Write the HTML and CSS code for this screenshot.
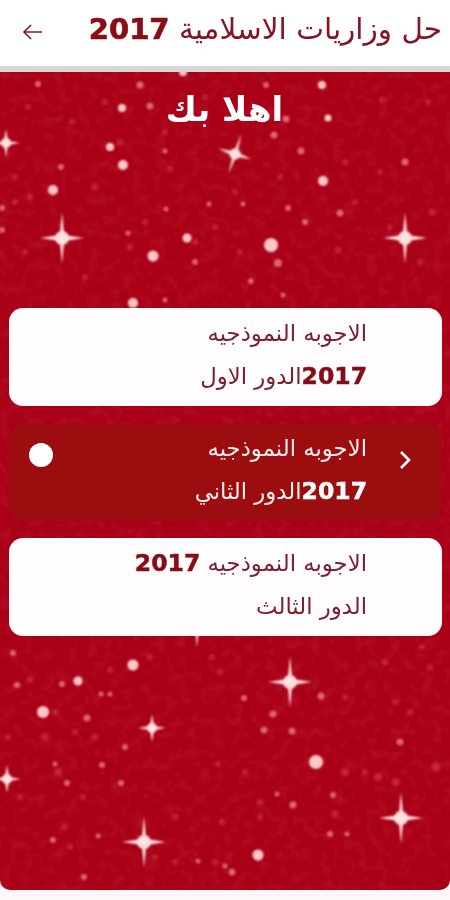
FILE: index.html
```html
<!DOCTYPE html>
<html lang="ar">
<head>
<meta charset="utf-8">
<title>حل وزاريات الاسلامية 2017</title>
<link rel="stylesheet" href="styles.css">
</head>
<body>
<div class="app">
  <header class="topbar">
    <svg class="back" viewBox="0 0 24 24" width="24" height="24" aria-hidden="true"><path d="M21 12H3M10 5l-7 7 7 7"/></svg>
    <h1 class="title">حل وزاريات الاسلامية <b class="year">2017</b></h1>
  </header>
  <main class="stage">
    <svg class="sky" viewBox="0 0 450 818" preserveAspectRatio="none" aria-hidden="true">
      <defs>
        <filter id="soft" x="-30%" y="-30%" width="160%" height="160%"><feGaussianBlur stdDeviation="1.6"/></filter>
        <filter id="softer" x="-30%" y="-30%" width="160%" height="160%"><feGaussianBlur stdDeviation="1.3"/></filter>
        <filter id="grain" x="0" y="0" width="100%" height="100%">
          <feTurbulence type="fractalNoise" baseFrequency="0.09" numOctaves="2" seed="5"/>
          <feColorMatrix values="0 0 0 0 1  0 0 0 0 0.2  0 0 0 0 0.3  1.6 0 0 0 -0.72"/>
        </filter>
        <g id="star"><path d="M0-26 2.2-3 22 0 2.2 3 0 26-2.2 3-22 0-2.2-3Z"/><circle r="7"/></g>
        <g id="starS"><path d="M0-14 2-2 14 0 2 2 0 14-2 2-14 0-2-2Z"/><circle r="5"/></g>
      </defs>
      <rect class="base" width="450" height="818"/>
      <rect class="noise" width="450" height="818" filter="url(#grain)"/>
      <g class="faint" filter="url(#soft)">
        <circle cx="28" cy="35" r="3"/><circle cx="72" cy="50" r="3"/><circle cx="105" cy="30" r="3"/><circle cx="165" cy="60" r="3"/><circle cx="205" cy="25" r="3"/><circle cx="382" cy="28" r="3"/><circle cx="428" cy="30" r="3"/>
        <circle cx="15" cy="105" r="3"/><circle cx="95" cy="115" r="3.5"/><circle cx="170" cy="97" r="3"/><circle cx="195" cy="170" r="3"/><circle cx="280" cy="105" r="3"/><circle cx="345" cy="90" r="3"/><circle cx="380" cy="100" r="3"/><circle cx="432" cy="140" r="3.5"/>
        <circle cx="120" cy="70" r="3"/><circle cx="25" cy="180" r="3"/><circle cx="15" cy="130" r="3"/><circle cx="145" cy="150" r="3"/><circle cx="215" cy="155" r="3"/><circle cx="235" cy="120" r="3"/><circle cx="240" cy="180" r="3"/><circle cx="338" cy="178" r="3.5"/><circle cx="355" cy="130" r="3"/><circle cx="390" cy="155" r="3"/><circle cx="420" cy="190" r="3"/><circle cx="85" cy="205" r="3"/><circle cx="130" cy="175" r="3"/><circle cx="250" cy="210" r="3"/><circle cx="30" cy="125" r="3"/>
        <circle cx="110" cy="598" r="3"/><circle cx="30" cy="608" r="3"/><circle cx="55" cy="640" r="3"/><circle cx="150" cy="585" r="3"/><circle cx="220" cy="600" r="3"/><circle cx="212" cy="585" r="3"/><circle cx="385" cy="590" r="3.5"/><circle cx="422" cy="575" r="3"/><circle cx="430" cy="595" r="3"/><circle cx="410" cy="640" r="3"/><circle cx="395" cy="630" r="3"/><circle cx="345" cy="625" r="3"/>
        <circle cx="8" cy="665" r="3"/><circle cx="45" cy="665" r="4"/><circle cx="75" cy="660" r="3"/><circle cx="95" cy="665" r="3"/><circle cx="58" cy="700" r="4"/><circle cx="83" cy="725" r="3"/><circle cx="218" cy="692" r="3"/><circle cx="245" cy="700" r="3"/><circle cx="345" cy="700" r="4"/><circle cx="378" cy="705" r="4"/><circle cx="436" cy="695" r="4.5"/><circle cx="396" cy="710" r="4"/><circle cx="175" cy="745" r="3"/><circle cx="222" cy="750" r="3"/><circle cx="260" cy="730" r="3"/><circle cx="335" cy="742" r="3.5"/><circle cx="365" cy="700" r="3"/><circle cx="70" cy="775" r="3"/><circle cx="65" cy="755" r="3"/><circle cx="20" cy="725" r="3"/><circle cx="155" cy="785" r="3"/><circle cx="175" cy="790" r="3"/><circle cx="260" cy="745" r="3"/><circle cx="215" cy="790" r="3"/>
      </g>
      <g class="mid" filter="url(#softer)">
        <circle cx="38" cy="12" r="3"/><circle cx="140" cy="13" r="3.5"/><circle cx="266" cy="13" r="3"/><circle cx="150" cy="34" r="3.5"/><circle cx="286" cy="47" r="3.5"/><circle cx="274" cy="63" r="3.5"/><circle cx="61" cy="95" r="3"/><circle cx="165" cy="79" r="2.5"/><circle cx="301" cy="79" r="3.5"/><circle cx="405" cy="90" r="3.5"/><circle cx="209" cy="132" r="2.5"/><circle cx="243" cy="132" r="2.5"/><circle cx="288" cy="136" r="3"/><circle cx="166" cy="137" r="2.5"/><circle cx="340" cy="141" r="3.5"/><circle cx="305" cy="150" r="3"/><circle cx="128" cy="161" r="2.5"/><circle cx="2" cy="136" r="3"/><circle cx="2" cy="158" r="3"/><circle cx="195" cy="190" r="3"/><circle cx="278" cy="191" r="4"/><circle cx="251" cy="209" r="2.5"/><circle cx="165" cy="228" r="2.5"/><circle cx="283" cy="223" r="2.5"/>
        <circle cx="13" cy="581" r="3"/><circle cx="17" cy="613" r="3"/><circle cx="62" cy="612" r="3"/><circle cx="101" cy="622" r="2.5"/><circle cx="110" cy="622" r="2.5"/><circle cx="244" cy="626" r="3"/><circle cx="321" cy="624" r="3.5"/><circle cx="273" cy="642" r="3.5"/><circle cx="264" cy="658" r="3.5"/><circle cx="292" cy="659" r="3.5"/><circle cx="87" cy="646" r="3.5"/><circle cx="125" cy="675" r="3"/><circle cx="400" cy="670" r="3.5"/><circle cx="102" cy="693" r="3"/><circle cx="67" cy="711" r="3"/><circle cx="121" cy="711" r="3"/><circle cx="55" cy="692" r="2.5"/><circle cx="333" cy="723" r="3"/><circle cx="293" cy="733" r="3.5"/><circle cx="225" cy="794" r="2.5"/><circle cx="277" cy="722" r="2.5"/><circle cx="198" cy="789" r="2.5"/><circle cx="232" cy="800" r="3.5"/><circle cx="84" cy="805" r="3"/><circle cx="53" cy="768" r="3"/><circle cx="347" cy="762" r="2.5"/><circle cx="330" cy="762" r="3"/><circle cx="98" cy="764" r="2.5"/>
      </g>
      <g class="pale" filter="url(#softer)">
        <circle cx="183" cy="0" r="4"/><circle cx="322" cy="13" r="4"/><circle cx="122" cy="36" r="4"/><circle cx="328" cy="46" r="3.5"/><circle cx="110" cy="75" r="4"/><circle cx="123" cy="93" r="5"/><circle cx="53" cy="118" r="5"/><circle cx="323" cy="109" r="5"/><circle cx="187" cy="166" r="4.5"/><circle cx="271" cy="173" r="7"/><circle cx="153" cy="184" r="5.5"/><circle cx="133" cy="231" r="5"/>
        <circle cx="133" cy="593" r="5.5"/><circle cx="78" cy="609" r="4.5"/><circle cx="43" cy="640" r="6"/><circle cx="316" cy="690" r="7"/><circle cx="258" cy="783" r="5.5"/>
      </g>
      <g class="bright" filter="url(#softer)">
        <use href="#star" x="62" y="166"/>
        <use href="#star" x="405" y="166"/>
        <use href="#star" transform="translate(235 82) rotate(18) scale(.8)"/>
        <use href="#starS" x="6" y="71"/>
        <use href="#star" x="144" y="770"/>
        <use href="#star" x="401" y="746"/>
        <use href="#star" x="290" y="610"/>
        <use href="#starS" x="152" y="656"/>
        <use href="#starS" x="7" y="707"/>
        <use href="#star" x="197" y="550"/>
      </g>
    </svg>
    <h2 class="welcome">اهلا بك</h2>
    <ul class="list">
      <li class="card">
        <div class="lines">
          <p class="line">الاجوبه النموذجيه</p>
          <p class="line"><b class="num">2017</b>الدور الاول</p>
        </div>
      </li>
      <li class="card active">
        <svg class="chev" viewBox="0 0 14 20" width="14" height="20" aria-hidden="true"><path d="M3 2 11 10 3 18"/></svg>
        <div class="lines">
          <p class="line">الاجوبه النموذجيه</p>
          <p class="line"><b class="num">2017</b>الدور الثاني</p>
        </div>
        <span class="dot"></span>
      </li>
      <li class="card">
        <div class="lines">
          <p class="line">الاجوبه النموذجيه <b class="num">2017</b></p>
          <p class="line">الدور الثالث</p>
        </div>
      </li>
    </ul>
  </main>
</div>
</body>
</html>
```
FILE: styles.css
```css
* { box-sizing: border-box; margin: 0; padding: 0; }
html, body { height: 100%; background: #fdf8f7; }
body { font-family: "DejaVu Sans", "Noto Sans", sans-serif; overflow: hidden; }
.app { width: 450px; height: 900px; display: flex; flex-direction: column; }

.topbar {
  height: 72px;
  flex: none;
  display: flex;
  align-items: flex-start;
  justify-content: space-between;
  padding: 9px 8px 0 21px;
  background: #fff;
  border-bottom: 6px solid #d9d6d6;
}
.back { margin-top: 11px; fill: none; stroke: #8f1420; stroke-width: 1.6; filter: blur(.3px); }
.title {
  direction: rtl;
  font-size: 29.5px;
  font-weight: 400;
  line-height: 40px;
  color: #861424;
  white-space: nowrap;
  filter: blur(.4px);
}
.year {
  font-size: 29px;
  font-weight: 700;
  color: #8a0c14;
  letter-spacing: .6px;
  -webkit-text-stroke: .7px #8a0c14;
}

.stage {
  position: relative;
  height: 818px;
  flex: none;
  overflow: hidden;
  border-radius: 0 0 10px 10px;
  padding: 14px 8px 0 9px;
}
.sky { position: absolute; inset: 0; width: 100%; height: 100%; }
.base { fill: #a90018; }
.noise { opacity: 0.16; }
.faint { fill: #e2505f; opacity: 0.45; }
.mid { fill: #f08f96; opacity: 0.7; }
.pale { fill: #ffc8c6; }
.bright { fill: #ffe2de; }

.welcome {
  position: relative;
  direction: rtl;
  text-align: center;
  color: #fff;
  font-size: 34px;
  font-weight: 700;
  line-height: 46px;
  padding-right: 2px;
  filter: blur(.4px);
}

.list {
  position: relative;
  list-style: none;
  display: flex;
  flex-direction: column;
  gap: 17.5px;
  margin-top: 176px;
}
.card {
  direction: rtl;
  height: 98px;
  display: flex;
  align-items: center;
  gap: 31px;
  padding: 0 30px 0 14px;
  border-radius: 14px;
  background: #fffdfd;
  color: #7d2030;
}
.card:not(.active) .lines { margin-right: 45px; }
.card.active { background: #9c0d0f; color: #fbeeee; height: 97px; }
.lines { display: flex; flex-direction: column; flex: 1; padding-bottom: 4px; filter: blur(.4px); }
.line { font-size: 22.8px; line-height: 43px; white-space: nowrap; }
.num { font-size: 23.5px; font-weight: 700; color: #860c16; -webkit-text-stroke: .5px #860c16; }
.active .num { color: #fff; -webkit-text-stroke-color: #fff; }
.chev { flex: none; margin-top: -24px; fill: none; stroke: #fff; stroke-width: 2.6; }
.dot { flex: none; width: 24px; height: 24px; margin: -34px 0 0 6px; border-radius: 50%; background: #fff; }
```
